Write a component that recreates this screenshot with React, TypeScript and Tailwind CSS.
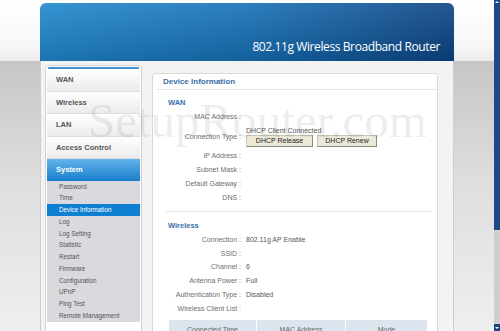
import React from "react";

const mainItems = ["WAN", "Wireless", "LAN", "Access Control"];
const subItems = [
  "Password",
  "Time",
  "Device Information",
  "Log",
  "Log Setting",
  "Statistic",
  "Restart",
  "Firmware",
  "Configuration",
  "UPnP",
  "Ping Test",
  "Remote Management",
];

function Row({ label, value, h = "h-[14px]" }: { label: string; value?: string; h?: string }) {
  return (
    <div className={`flex items-center shrink-0 ${h}`}>
      <div className="w-[88px] text-right text-[#6e6e6e]">{label} :</div>
      <div className="pl-[5px] text-[#555]">{value}</div>
    </div>
  );
}

export default function App() {
  return (
    <div
      className="relative w-[500px] h-[331px] overflow-hidden flex"
      style={{ fontFamily: '"Liberation Sans", Arial, sans-serif' }}
    >
      <div className="w-[494px] h-full bg-[linear-gradient(to_bottom,#ffffff_0px,#f7f7f7_45px,#ececec_61px,#c6c6c6_61px,#dedede_180px,#efefef_331px)] pl-[40px] pt-[3px]">
        <div className="w-[414px] h-full flex flex-col">
          {/* Header */}
          <div className="shrink-0 h-[58px] rounded-t-[6px] bg-[linear-gradient(to_bottom,rgba(255,255,255,0.1),rgba(0,0,0,0.14)),linear-gradient(to_right,#2088cd,#1670b6_50%,#0c4484)] flex flex-col justify-end items-end pr-[14px] pb-[6px]">
            <div
              className="text-white text-[12px] leading-[16px] tracking-[-0.4px]"
              style={{ fontFamily: '"Open Sans", "Noto Sans", sans-serif' }}
            >
              802.11g Wireless Broadband Router
            </div>
          </div>
          {/* Body */}
          <div className="flex-1 min-h-0 overflow-hidden bg-[#f3f3f3] border-x border-[#cdcdcd] flex items-start">
            {/* Sidebar */}
            <div className="shrink-0 ml-[4px] mt-[4px] w-[97px] h-[290px] bg-white border border-[#d2d2d2] rounded-[4px] px-[1px] flex flex-col">
              <div className="shrink-0 mt-[1px] mx-[1px] h-[2px] bg-[#3d8fd0] rounded-full" />
              {mainItems.map((m) => (
                <div
                  key={m}
                  className="shrink-0 h-[22.5px] flex items-center pl-[9px] text-[7.5px] font-bold text-[#555] bg-[linear-gradient(to_bottom,#ffffff,#ebebeb)] border-b border-[#dedede]"
                >
                  {m}
                </div>
              ))}
              <div className="shrink-0 h-[21.5px] flex items-center pl-[9px] text-[7.5px] font-bold text-white bg-[linear-gradient(to_bottom,#63b4ea,#1a7ecc)]">
                System
              </div>
              <div className="shrink-0 bg-[#d9d9de]">
                {subItems.map((s) => (
                  <div
                    key={s}
                    className={`h-[11.75px] flex items-center pl-[12px] text-[6.3px] ${
                      s === "Device Information" ? "bg-[#0f80d1] text-white" : "text-[#555]"
                    }`}
                  >
                    {s}
                  </div>
                ))}
              </div>
            </div>
            {/* Content */}
            <div className="shrink-0 ml-[10px] mt-[12px] w-[286px] h-[290px] bg-white border border-[#d9d9d9] rounded-[4px] flex flex-col text-[7px]">
              <div className="shrink-0 h-[15px] flex items-center pl-[10px] text-[8px] font-bold text-[#3570a8]">
                Device Information
              </div>
              <div className="shrink-0 h-px bg-[#e5e5e5] ml-[4px]" />
              <div className="shrink-0 mt-[5px] h-[15px] flex items-center pl-[15px] text-[7.5px] font-bold text-[#3570a8]">
                WAN
              </div>
              <Row label="MAC Address" />
              <div className="shrink-0 flex h-[26px]">
                <div className="w-[88px] text-right text-[#6e6e6e] flex items-center justify-end">
                  Connection Type :
                </div>
                <div className="pl-[5px] pt-[2px] flex flex-col">
                  <div className="h-[9px] leading-[9px] text-[#555]">DHCP Client Connected</div>
                  <div className="h-[12px] flex gap-[4px]">
                    <div className="w-[67px] h-full flex items-center justify-center bg-[#ece9d8] border border-[#c9c5b4] border-r-[#8d8a7e] border-b-[#8d8a7e] text-[#222]">
                      DHCP Release
                    </div>
                    <div className="w-[60px] h-full flex items-center justify-center bg-[#ece9d8] border border-[#c9c5b4] border-r-[#8d8a7e] border-b-[#8d8a7e] text-[#222]">
                      DHCP Renew
                    </div>
                  </div>
                </div>
              </div>
              <Row label="IP Address" h="h-[13px]" />
              <Row label="Subnet Mask" />
              <Row label="Default Gateway" />
              <Row label="DNS" />
              <div className="shrink-0 mt-[6px] h-px bg-[#e3e3e3] ml-[13px] mr-[5px]" />
              <div className="shrink-0 mt-[7px] h-[14px] flex items-center pl-[15px] text-[7.5px] font-bold text-[#3570a8]">
                Wireless
              </div>
              <Row label="Connection" value="802.11g AP Enable" />
              <Row label="SSID" />
              <Row label="Channel" value="6" h="h-[13px]" />
              <Row label="Antenna Power" value="Full" />
              <Row label="Authentication Type" value="Disabled" />
              <Row label="Wireless Client List" />
              <div className="shrink-0 mt-[4px] ml-[16px] w-[258px] h-[20px] flex bg-[#dce5ee] text-[#666]">
                <div className="w-[88px] flex items-center justify-center border-r border-white">
                  Connected Time
                </div>
                <div className="w-[89px] flex items-center justify-center border-r border-white">
                  MAC Address
                </div>
                <div className="flex-1 flex items-center justify-center">Mode</div>
              </div>
            </div>
          </div>
        </div>
      </div>
      {/* Scrollbar */}
      <div className="w-[6px] h-full flex flex-col bg-[#cfcfcf]">
        <div className="h-[4px] bg-[#1b4580] flex items-center justify-center">
          <div className="w-0 h-0 border-x-[2px] border-x-transparent border-b-[2px] border-b-white" />
        </div>
        <div className="h-[226px] bg-[#1d4a86]" />
        <div className="flex-1" />
        <div className="h-[7px] bg-[#1b4580] flex items-center justify-center">
          <div className="w-0 h-0 border-x-[2px] border-x-transparent border-t-[2px] border-t-white" />
        </div>
      </div>
      {/* Watermark */}
      <div
        className="absolute left-[88px] top-[96px] text-[49px] leading-[49px] text-[rgba(0,0,0,0.07)] pointer-events-none whitespace-nowrap"
        style={{ fontFamily: '"Liberation Serif", "Times New Roman", serif' }}
      >
        SetupRouter.com
      </div>
    </div>
  );
}
